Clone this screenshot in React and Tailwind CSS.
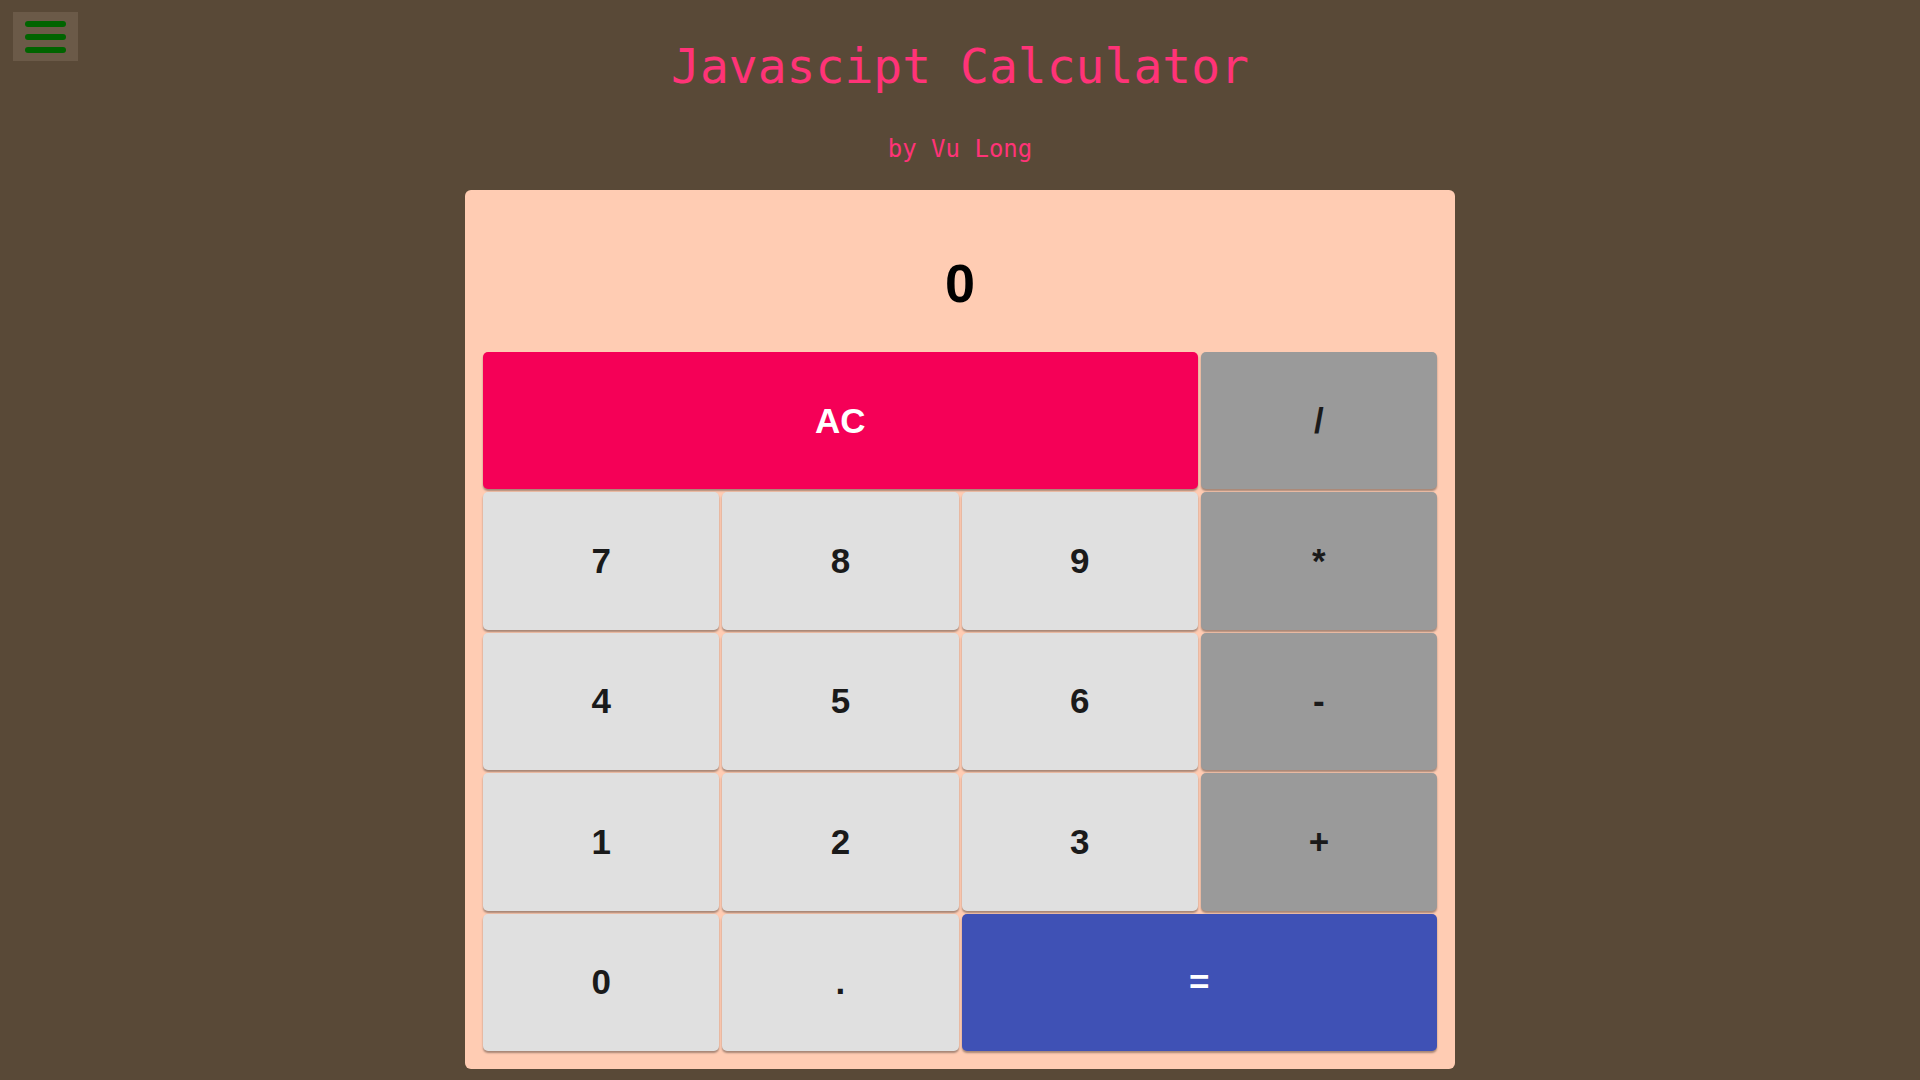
import { useState } from "react";

const keys = [
    { label: "AC", cls: "col-span-3 bg-[#f50057] text-white" },
    { label: "/", cls: "bg-[#9a9a9a] text-[#1a1a1a]" },
    { label: "7", cls: "bg-[#e0e0e0] text-[#1a1a1a]" },
    { label: "8", cls: "bg-[#e0e0e0] text-[#1a1a1a]" },
    { label: "9", cls: "bg-[#e0e0e0] text-[#1a1a1a]" },
    { label: "*", cls: "bg-[#9a9a9a] text-[#1a1a1a]" },
    { label: "4", cls: "bg-[#e0e0e0] text-[#1a1a1a]" },
    { label: "5", cls: "bg-[#e0e0e0] text-[#1a1a1a]" },
    { label: "6", cls: "bg-[#e0e0e0] text-[#1a1a1a]" },
    { label: "-", cls: "bg-[#9a9a9a] text-[#1a1a1a]" },
    { label: "1", cls: "bg-[#e0e0e0] text-[#1a1a1a]" },
    { label: "2", cls: "bg-[#e0e0e0] text-[#1a1a1a]" },
    { label: "3", cls: "bg-[#e0e0e0] text-[#1a1a1a]" },
    { label: "+", cls: "bg-[#9a9a9a] text-[#1a1a1a]" },
    { label: "0", cls: "bg-[#e0e0e0] text-[#1a1a1a]" },
    { label: ".", cls: "bg-[#e0e0e0] text-[#1a1a1a]" },
    { label: "=", cls: "col-span-2 bg-[#3f51b5] text-white" },
];

export default function App() {
    const [display, setDisplay] = useState("0");

    const handleKey = (label) => {
        if (label === "AC") return setDisplay("0");
        if (label === "=") {
            try {
                // eslint-disable-next-line no-new-func
                setDisplay(String(Function(`return (${display})`)()));
            } catch (e) {
                setDisplay("0");
            }
            return;
        }
        setDisplay((prev) => (prev === "0" && label !== "." ? label : prev + label));
    };

    return (
        <div className="relative min-h-screen bg-[#594937] pb-[10px]">
            <button className="absolute left-[13px] top-[12px] w-[65px] h-[49px] bg-[#6b5a48] flex flex-col items-center justify-center gap-[7px]">
                <span className="block w-[41px] h-[6px] rounded-full bg-[#006400]" />
                <span className="block w-[41px] h-[6px] rounded-full bg-[#006400]" />
                <span className="block w-[41px] h-[6px] rounded-full bg-[#006400]" />
            </button>

            <h1 className="pt-[42px] text-center text-[48px] leading-none text-[#ff3377] font-['DejaVu_Sans_Mono',monospace]">
                Javascipt Calculator
            </h1>
            <h4 className="mt-[47px] text-center text-[24px] leading-none text-[#ff3377] font-['DejaVu_Sans_Mono',monospace]">
                by Vu Long
            </h4>

            <div className="mt-[29px] mx-auto w-[990px] rounded-md bg-[#ffccb3] px-[18px] pt-[24px] pb-[18px]">
                <div className="h-[138px] flex items-center justify-center text-[54px] leading-none font-bold text-black font-['Liberation_Sans',Arial,sans-serif]">
                    {display}
                </div>
                <div className="grid grid-cols-4 grid-rows-5 gap-[3px] h-[699px]">
                    {keys.map((k) => (
                        <button
                            key={k.label}
                            onClick={() => handleKey(k.label)}
                            className={`${k.cls} rounded-[5px] flex items-center justify-center text-[35px] font-bold leading-none pb-[1px] shadow-[0_2px_2px_rgba(0,0,0,0.35)] font-['Liberation_Sans',Arial,sans-serif]`}
                        >
                            {k.label}
                        </button>
                    ))}
                </div>
            </div>
        </div>
    );
}
